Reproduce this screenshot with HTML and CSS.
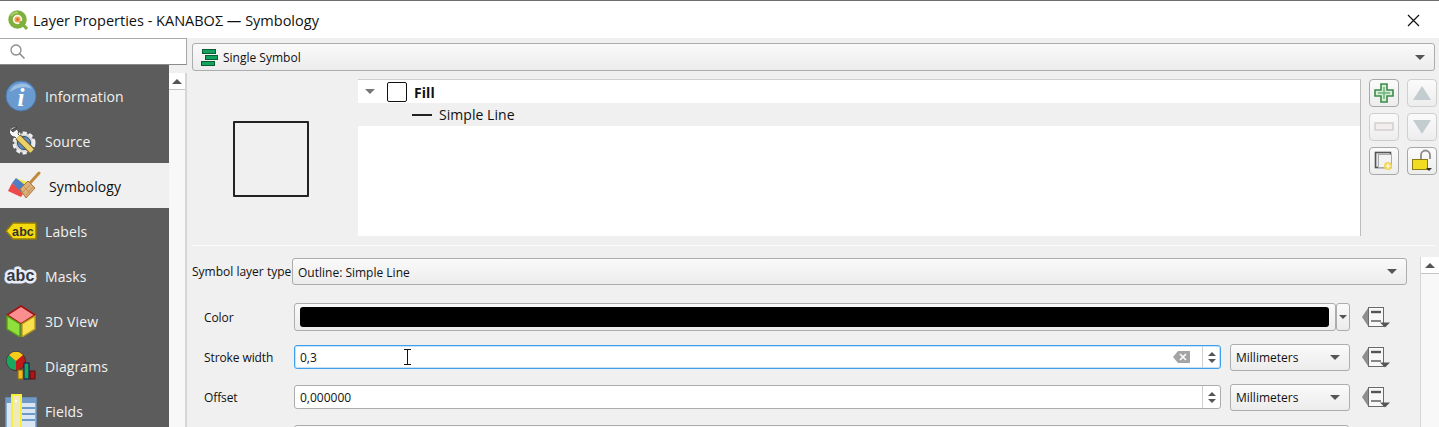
FILE: index.html
```html
<!DOCTYPE html>
<html lang="en">
<head>
    <meta charset="UTF-8">
    <meta name="viewport" content="width=device-width, initial-scale=1.0">
    <title>Layer Properties</title>
    <link rel="stylesheet" href="styles.css">
</head>
<body>
<div class="window">
    <div class="titlebar">
        <svg class="qgis-logo" width="20" height="20" viewBox="0 0 20 20">
            <path d="M11 11l7 7.500" stroke="#fff" stroke-width="5"/>
            <circle cx="9.500" cy="9.500" r="7" fill="#fdf6e8" stroke="#7fb03f" stroke-width="4.500"/>
            <path d="M3 6a7 7 0 0 1 7-3.500" fill="none" stroke="#a9cc6c" stroke-width="2"/>
            <circle cx="9.500" cy="9.500" r="3" fill="#f3a24a"/>
            <circle cx="9.500" cy="9.500" r="1.300" fill="#e2623a"/>
            <path d="M12 11.500l7 7.500" stroke="#7fb03f" stroke-width="3"/>
        </svg>
        <span class="title-text">Layer Properties - ΚΑΝΑΒΟΣ — Symbology</span>
        <svg class="close-icon" width="13" height="13" viewBox="0 0 13 13">
            <path d="M1 1l11 11M12 1L1 12" stroke="#111" stroke-width="1.2"/>
        </svg>
    </div>

    <div class="content">
        <div class="sidebar">
            <div class="search-box">
                <svg width="17" height="17" viewBox="0 0 17 17">
                    <circle cx="7" cy="7" r="5" fill="none" stroke="#8a8a8a" stroke-width="1.3"/>
                    <path d="M10.500 10.500l5 5" stroke="#8a8a8a" stroke-width="1.6"/>
                </svg>
            </div>
            <div class="side-body">
                <div class="nav-list">
                    <div class="nav-item">
                        <svg class="nav-icon" width="32" height="32" viewBox="0 0 32 32">
                            <circle cx="16" cy="16" r="15" fill="#6a9bd0" stroke="#4a78ad"/>
                            <path d="M5 12a12 11 0 0 1 22-3c-7-3-15-2-22 3z" fill="#9dbfe3"/>
                            <text x="16" y="26" class="info-i">i</text>
                        </svg>
                        <span>Information</span>
                    </div>
                    <div class="nav-item">
                        <svg class="nav-icon" width="32" height="32" viewBox="0 0 32 32">
                            <circle cx="19" cy="18" r="10" fill="#d4d4d4" stroke="#efefef" stroke-width="3" stroke-dasharray="4 2.500"/>
                            <circle cx="19" cy="18" r="6.500" fill="#5f8fc4" stroke="#2b4a70"/>
                            <path d="M12 2C7 1 3 5 5 9c1 2 3 3 5 3l6 6 3-3-6-6c1-2 0-4-1-5L8 7 6 5z" fill="#f7f7f7" stroke="#333" stroke-width=".8"/>
                            <path d="M13 12l14 14" stroke="#70602a" stroke-width="7"/>
                            <path d="M13 12l14 14" stroke="#ecd06a" stroke-width="5"/>
                        </svg>
                        <span>Source</span>
                    </div>
                    <div class="nav-item active">
                        <svg class="nav-icon" width="33" height="32" viewBox="0 0 33 32">
                            <path d="M7 8l16 5-8 12z" fill="#f6e64a"/>
                            <path d="M4 13l4-5 9 7-4 9z" fill="#4e7fc4"/>
                            <path d="M0 21l4-8 11 11-2 3z" fill="#ef4a4a"/>
                            <path d="M22 13L31 3" stroke="#c08a3c" stroke-width="3" stroke-linecap="round"/>
                            <path d="M12 19l8-8 7 7-9 10z" fill="#dcae78" stroke="#a8773a"/>
                            <path d="M15 22l7-7M18 25l7-8M16 17l6 6" stroke="#b98a4e" stroke-width=".7"/>
                        </svg>
                        <span>Symbology</span>
                    </div>
                    <div class="nav-item">
                        <svg class="nav-icon" width="32" height="32" viewBox="0 0 32 32">
                            <path d="M1 16l7-8h22a1 1 0 0 1 1 1v15H8z" fill="#f5d90f" stroke="#8f7b0c" stroke-width="1.400"/>
                            <text x="18" y="20.500" class="abc-small">abc</text>
                        </svg>
                        <span>Labels</span>
                    </div>
                    <div class="nav-item masks">
                        <svg class="nav-icon" width="34" height="32" viewBox="0 0 34 32">
                            <text x="17.500" y="21" class="abc-mask">abc</text>
                        </svg>
                        <span>Masks</span>
                    </div>
                    <div class="nav-item">
                        <svg class="nav-icon" width="32" height="32" viewBox="0 0 32 32">
                            <path d="M16 1l14 9-14 9-14-9z" fill="#fb8f8f" stroke="#a01414" stroke-width="1.600"/>
                            <path d="M2 11l13 8v13L2 24z" fill="#8fe03c" stroke="#5c9a1c" stroke-width="1.400"/>
                            <path d="M30 11l-13 8v13l13-8z" fill="#f9e04e" stroke="#b89a1c" stroke-width="1.400"/>
                        </svg>
                        <span>3D View</span>
                    </div>
                    <div class="nav-item">
                        <svg class="nav-icon" width="32" height="32" viewBox="0 0 32 32">
                            <circle cx="11" cy="11" r="9.500" fill="#c01a1a" stroke="#333"/>
                            <path d="M11 11V20a9 9 0 0 1-7-15z" fill="#18a860"/>
                            <path d="M4 5a9 9 0 0 1 14 0l-7 6z" fill="#f6cc1c"/>
                            <rect x="13" y="20" width="5" height="9" fill="#f6b81c" stroke="#8a6a10"/>
                            <rect x="19" y="13" width="5" height="16" fill="#18a860" stroke="#115"/>
                            <rect x="25" y="21" width="5" height="8" fill="#b01414" stroke="#511"/>
                        </svg>
                        <span>Diagrams</span>
                    </div>
                    <div class="nav-item">
                        <svg class="nav-icon" width="32" height="34" viewBox="0 0 32 34">
                            <rect x="1" y="4" width="30" height="30" fill="#dbe6f3" stroke="#6f9ac8" stroke-width="1.500"/>
                            <rect x="1" y="4" width="30" height="5" fill="#6f9ac8"/>
                            <path d="M16 14h14M16 20h14M16 26h14" stroke="#6f9ac8" stroke-width="2"/>
                            <rect x="7" y="1" width="9" height="33" fill="#efe9bc" stroke="#f6f03c" stroke-width="2"/>
                            <rect x="10" y="6" width="2" height="2" fill="#fff"/>
                        </svg>
                        <span>Fields</span>
                    </div>
                </div>
                <div class="side-scroll">
                    <div class="scroll-up"><i class="tri-up"></i></div>
                </div>
            </div>
        </div>

        <div class="main">
            <div class="combo renderer-combo">
                <svg width="18" height="19" viewBox="0 0 18 19">
                    <rect x="2.500" y="1.500" width="13" height="4" fill="#12a35a" stroke="#0a5c34"/>
                    <rect x="5.500" y="7.500" width="12" height="4" fill="#12a35a" stroke="#0a5c34"/>
                    <rect x="1.500" y="13.500" width="13" height="4" fill="#12a35a" stroke="#0a5c34"/>
                </svg>
                <span>Single Symbol</span>
                <i class="tri-down"></i>
            </div>

            <div class="symbol-section">
                <div class="preview">
                    <div class="preview-square"></div>
                </div>
                <div class="tree">
                    <div class="tree-row">
                        <i class="tri-down tree-arrow"></i>
                        <div class="fill-swatch"></div>
                        <b>Fill</b>
                    </div>
                    <div class="tree-row sub">
                        <div class="line-swatch"></div>
                        <span>Simple Line</span>
                    </div>
                </div>
                <div class="tool-buttons">
                    <div class="tool-btn">
                        <svg width="22" height="22" viewBox="0 0 22 22">
                            <path d="M8 2h6v6h6v6h-6v6H8v-6H2V8h6z" fill="#d5ecd5" stroke="#3f8a4d" stroke-width="1.600"/>
                            <path d="M11 5v12M5 11h12" stroke="#6db27a" stroke-width="1.500"/>
                        </svg>
                    </div>
                    <div class="tool-btn off">
                        <svg width="20" height="18" viewBox="0 0 20 18"><path d="M10 2l9 14H1z" fill="#c3cdcf"/></svg>
                    </div>
                    <div class="tool-btn off">
                        <svg width="20" height="10" viewBox="0 0 20 10"><rect x="1" y="1" width="18" height="7" fill="#f2eeee" stroke="#d2cccc" stroke-width="1.400"/></svg>
                    </div>
                    <div class="tool-btn off">
                        <svg width="20" height="18" viewBox="0 0 20 18"><path d="M10 16l9-14H1z" fill="#c3cdcf"/></svg>
                    </div>
                    <div class="tool-btn">
                        <svg width="20" height="20" viewBox="0 0 20 20">
                            <rect x="1.500" y="1.500" width="15" height="15" fill="#e6e6e6" stroke="#555" stroke-width="1.600"/>
                            <rect x="4.500" y="3.500" width="13" height="13" fill="#f3f3f3" stroke="#aaa"/>
                            <circle cx="14" cy="15" r="4" fill="#f2d552"/>
                            <path d="M11.500 15h5M14 12.500v5" stroke="#fff" stroke-width="1.200"/>
                        </svg>
                    </div>
                    <div class="tool-btn">
                        <svg width="22" height="24" viewBox="0 0 22 24">
                            <path d="M10 11V6a4.500 4.500 0 0 1 9 0v4" fill="none" stroke="#8c8c8c" stroke-width="1.800"/>
                            <rect x="1.500" y="10.500" width="15" height="10" fill="#f1dc22" stroke="#8a7c10"/>
                            <path d="M15 19h6l-3 3z" fill="#333"/>
                        </svg>
                    </div>
                </div>
            </div>

            <div class="divider"></div>

            <div class="layer-panel">
                <div class="form">
                    <div class="type-row">
                        <label>Symbol layer type</label>
                        <div class="combo type-combo"><span>Outline: Simple Line</span><i class="tri-down"></i></div>
                    </div>

                    <div class="field-row color-row">
                        <label>Color</label>
                        <div class="color-btn"><div class="color-fill"></div></div>
                        <div class="color-drop"><i class="tri-down small"></i></div>
                        <svg class="dd-icon" width="30" height="26" viewBox="0 0 30 26"><use href="#dd"/></svg>
                    </div>

                    <div class="field-row stroke-row">
                        <label>Stroke width</label>
                        <div class="spin focused">
                            <span class="spin-value">0,3</span>
                            <svg class="clear-icon" width="17" height="12" viewBox="0 0 17 12">
                                <path d="M0 6l5-6h12v12H5z" fill="#a4a4a4"/>
                                <path d="M7 3l6 6M13 3l-6 6" stroke="#fff" stroke-width="1.600"/>
                            </svg>
                            <div class="spin-arrows"><i class="tri-up small"></i><i class="tri-down small"></i></div>
                            <svg class="ibeam" width="9" height="16" viewBox="0 0 9 16">
                                <path d="M1 .5h7M1 15.500h7M4.500 .5v15" stroke="#111" stroke-width="1" fill="none"/>
                            </svg>
                        </div>
                        <div class="combo unit-combo"><span>Millimeters</span><i class="tri-down"></i></div>
                        <svg class="dd-icon" width="30" height="26" viewBox="0 0 30 26"><use href="#dd"/></svg>
                    </div>

                    <div class="field-row offset-row">
                        <label>Offset</label>
                        <div class="spin">
                            <span class="spin-value">0,000000</span>
                            <div class="spin-arrows"><i class="tri-up small"></i><i class="tri-down small"></i></div>
                        </div>
                        <div class="combo unit-combo"><span>Millimeters</span><i class="tri-down"></i></div>
                        <svg class="dd-icon" width="30" height="26" viewBox="0 0 30 26"><use href="#dd"/></svg>
                    </div>

                    <div class="field-row">
                        <label></label>
                        <div class="combo last-combo"></div>
                    </div>
                </div>
                <div class="form-scroll">
                    <div class="scroll-up"><i class="tri-up"></i></div>
                </div>
            </div>
        </div>
    </div>
</div>

<!-- data defined override button, used on every row -->
<svg class="defs" width="0" height="0">
    <symbol id="dd" viewBox="0 0 30 26">
        <path d="M2 13l6-9v18z" fill="#8e8e8e"/>
        <rect x="8.500" y="3.500" width="15" height="19" fill="#f7f7f7" stroke="#6a6a6a"/>
        <path d="M11 8h10" stroke="#555" stroke-width="2.400"/>
        <path d="M11 17h10" stroke="#555" stroke-width="1.400"/>
        <path d="M20 18.500h10l-5 5z" fill="#555"/>
    </symbol>
</svg>
</body>
</html>
```

FILE: styles.css
```css
* {
    box-sizing: border-box;
}

html, body {
    margin: 0;
    height: 100%;
    overflow: hidden;
}

body {
    font-family: "Open Sans", "Noto Sans", sans-serif;
    font-size: 12px;
    color: #111;
    background: #f0f0f0;
}

.window {
    height: 427px;
    display: flex;
    flex-direction: column;
    border-top: 1px solid #6e6e6e;
}

.titlebar {
    height: 37px;
    flex: none;
    display: flex;
    align-items: center;
    padding: 1px 19px 0 8px;
    background: #fff;
}

.qgis-logo {
    margin-right: 5px;
}

.title-text {
    font-size: 14.5px;
}

.close-icon {
    margin-left: auto;
}

.content {
    flex: 1;
    display: flex;
    min-height: 0;
}

/* left column */
.sidebar {
    width: 187px;
    flex: none;
    display: flex;
    flex-direction: column;
}

.search-box {
    height: 27px;
    flex: none;
    display: flex;
    align-items: center;
    padding-left: 9px;
    background: #fff;
    border: 1px solid #a8a8a8;
    border-left: 0;
    border-bottom-color: #8c8c8c;
}

.side-body {
    flex: 1;
    display: flex;
    min-height: 0;
}

.nav-list {
    width: 169px;
    flex: none;
    padding-top: 8px;
    background: #5c5c5c;
    overflow: hidden;
}

.nav-item {
    height: 45px;
    display: flex;
    align-items: center;
    gap: 8px;
    padding-left: 5px;
    font-size: 14px;
    color: #f1f1f1;
    letter-spacing: 0.1px;
}

.nav-item span {
    padding-top: 2px;
}

.nav-item.active {
    background: #f0f0f0;
    color: #111;
    padding-left: 8px;
}

.nav-item.masks {
    padding-left: 3px;
}

.nav-icon {
    flex: none;
}

.info-i {
    font-family: "Liberation Serif", serif;
    font-size: 25px;
    font-weight: bold;
    font-style: italic;
    fill: #fff;
    text-anchor: middle;
}

.abc-small {
    font-family: "Liberation Sans", sans-serif;
    font-size: 12.5px;
    font-weight: bold;
    fill: #333;
    text-anchor: middle;
}

.abc-mask {
    font-family: "Liberation Sans", sans-serif;
    font-size: 16px;
    font-weight: bold;
    fill: #33363d;
    stroke: #e6ecf8;
    stroke-width: 5px;
    stroke-linejoin: round;
    paint-order: stroke;
    text-anchor: middle;
}

.side-scroll {
    flex: 1;
    margin-top: 8px;
    background: #f8f8f8;
    border-right: 2px solid #d6d6d6;
}

.scroll-up {
    height: 17px;
    display: flex;
    align-items: center;
    justify-content: center;
    background: #fff;
    border-bottom: 1px solid #c4c4c4;
}

/* small triangles */
.tri-up, .tri-down {
    display: block;
    width: 0;
    height: 0;
    border-left: 5px solid transparent;
    border-right: 5px solid transparent;
}

.tri-up {
    border-bottom: 5px solid #555;
}

.tri-down {
    border-top: 5px solid #555;
}

.tri-up.small, .tri-down.small {
    border-left-width: 4px;
    border-right-width: 4px;
}

.tri-up.small {
    border-bottom-width: 4px;
}

.tri-down.small {
    border-top-width: 4px;
}

/* right column */
.main {
    flex: 1;
    min-width: 0;
    display: flex;
    flex-direction: column;
    padding: 5px 0 0 5px;
}

.combo {
    display: flex;
    align-items: center;
    padding: 0 9px 0 5px;
    background: linear-gradient(#fafafa, #ececec);
    border: 1px solid #adadad;
    border-radius: 3px;
}

.combo .tri-down {
    margin-left: auto;
}

.renderer-combo {
    height: 28px;
    margin-right: 4px;
    gap: 5px;
    padding-left: 7px;
    flex: none;
}

.symbol-section {
    display: flex;
    height: 157px;
    margin-top: 8px;
    flex: none;
}

.preview {
    width: 166px;
    flex: none;
    padding: 42px 0 0 41px;
}

.preview-square {
    width: 76px;
    height: 76px;
    border: 2px solid #222;
    border-radius: 1px;
}

.tree {
    width: 1003px;
    flex: none;
    background: #fff;
    border-top: 1px solid #d0d0d0;
    border-right: 1px solid #bdbdbd;
}

.tree-row {
    height: 23px;
    display: flex;
    align-items: center;
    font-size: 14px;
    letter-spacing: 0.05px;
    padding-left: 7px;
}

.tree-row b {
    font-size: 14px;
    margin-left: 7px;
    padding-top: 2px;
}

.tree-row.sub {
    background: #f0f0f0;
    padding-left: 54px;
    gap: 7px;
}

.tree-arrow {
    margin: 0 12px 0 0;
    border-top-color: #777;
}

.fill-swatch {
    width: 20px;
    height: 20px;
    border: 1px solid #111;
    border-radius: 2px;
    background: #fff;
}

.line-swatch {
    width: 20px;
    height: 2px;
    background: #222;
}

.tool-buttons {
    width: 68px;
    flex: none;
    display: grid;
    grid-template-columns: 30px 30px;
    grid-auto-rows: 28px;
    gap: 6px 8px;
    margin-left: 8px;
}

.tool-btn {
    display: flex;
    align-items: center;
    justify-content: center;
    background: linear-gradient(#fbfbfb, #ededed);
    border: 1px solid #a8a8a8;
    border-radius: 4px;
}

.tool-btn.off {
    border-color: #cfcfcf;
}

.divider {
    height: 1px;
    flex: none;
    margin: 9px 4px 0 0;
    background: #fbfbfb;
}

.layer-panel {
    flex: 1;
    display: flex;
    min-height: 0;
    padding-top: 11px;
}

.form {
    flex: 1;
    min-width: 0;
    padding-top: 1px;
    overflow: hidden;
}

.type-row {
    display: flex;
    align-items: center;
    height: 27px;
    padding-right: 13px;
}

.type-row label {
    width: 100px;
    flex: none;
    white-space: nowrap;
}

.type-combo {
    flex: 1;
    height: 27px;
}

.type-combo span {
    padding-top: 1px;
}

.field-row {
    display: flex;
    align-items: center;
    padding-left: 12px;
    margin-top: 16px;
}

.field-row label {
    width: 91px;
    flex: none;
    margin-right: -1px;
    letter-spacing: -0.1px;
}

.color-row {
    margin-top: 18px;
    height: 28px;
}

.stroke-row {
    margin-top: 14px;
    height: 24px;
}

.offset-row {
    height: 24px;
}

.color-btn {
    width: 1042px;
    height: 28px;
    flex: none;
    padding: 3px 6px 3px 5px;
    background: linear-gradient(#fafafa, #ececec);
    border: 1px solid #adadad;
    border-radius: 3px;
}

.color-fill {
    height: 100%;
    background: #000;
    border-radius: 3px;
}

.color-drop {
    width: 14px;
    height: 28px;
    flex: none;
    display: flex;
    align-items: center;
    justify-content: center;
    background: linear-gradient(#fafafa, #ececec);
    border: 1px solid #adadad;
    border-radius: 3px;
}

.dd-icon {
    flex: none;
    margin-left: 10px;
}

.spin {
    position: relative;
    width: 927px;
    height: 24px;
    flex: none;
    display: flex;
    align-items: center;
    padding-left: 5px;
    background: #fff;
    border: 1px solid #adadad;
    border-radius: 3px;
}

.spin.focused {
    border-color: #3d9fee;
    box-shadow: inset 0 0 0 1px #c4e2fa;
}

.spin-value {
    flex: 1;
}

.clear-icon {
    margin-right: 12px;
}

.spin-arrows {
    width: 18px;
    height: 100%;
    flex: none;
    display: flex;
    flex-direction: column;
    align-items: center;
    justify-content: center;
    gap: 3px;
    border-left: 1px solid #d0d0d0;
}

/* mouse pointer captured in the screenshot */
.ibeam {
    position: absolute;
    left: 108px;
    top: 3px;
}

.unit-combo {
    width: 120px;
    height: 27px;
    flex: none;
    margin-left: 9px;
}

.last-combo {
    width: 1055px;
    height: 27px;
    flex: none;
}

.form-scroll {
    width: 19px;
    flex: none;
    background: #f8f8f8;
    border-left: 1px solid #d6d6d6;
}

.defs {
    position: absolute;
}
```
